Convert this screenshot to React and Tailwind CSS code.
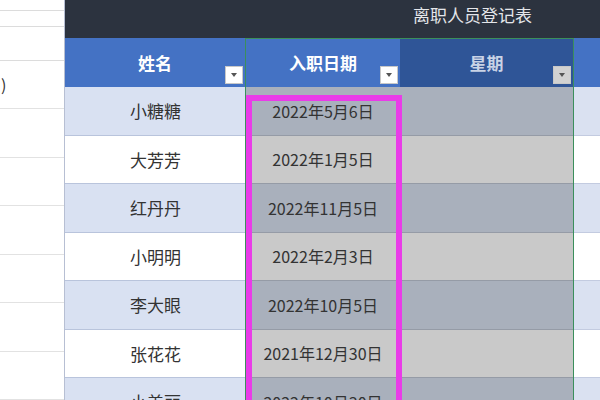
const rows = [
  { name: "小糖糖", date: "2022年5月6日" },
  { name: "大芳芳", date: "2022年1月5日" },
  { name: "红丹丹", date: "2022年11月5日" },
  { name: "小明明", date: "2022年2月3日" },
  { name: "李大眼", date: "2022年10月5日" },
  { name: "张花花", date: "2021年12月30日" },
  { name: "小美丽", date: "2022年10月30日" },
];

function Dropdown({ grey }) {
  return (
    <div
      className={
        "absolute right-[2px] bottom-[3px] w-[18px] h-[18px] flex items-center justify-center border border-[#c8c8c8] " +
        (grey ? "bg-[#d2d2d2]" : "bg-white")
      }
    >
      <div className="w-0 h-0 border-l-[3px] border-r-[3px] border-t-[4px] border-l-transparent border-r-transparent border-t-[#555]" />
    </div>
  );
}

export default function App() {
  return (
    <div
      className="relative w-[600px] h-[400px] overflow-hidden bg-white flex text-[#333]"
      style={{ fontFamily: '"Noto Sans CJK SC", "Noto Sans", sans-serif' }}
    >
      {/* left sheet strip */}
      <div className="w-[65px] shrink-0 flex flex-col border-r border-[#b7bfd3]">
        <div className="h-[16px] border-b border-[#dcdcdc]" />
        <div className="h-[22px] border-b border-[#dcdcdc]" />
        <div className="h-[49px] border-b border-[#dcdcdc]" />
        {rows.map((r, i) => (
          <div
            key={i}
            className="h-[48.5px] shrink-0 border-b border-[#e2e2e2] flex items-center text-[16px] pl-[1px]"
          >
            {i === 0 ? ")" : ""}
          </div>
        ))}
      </div>

      {/* table */}
      <div className="flex-1 flex flex-col">
        <div className="h-[38px] shrink-0 bg-[#2c333f] flex items-start pt-[2px] pl-[348px] text-[17px] text-[#e4e6ea]">
          离职人员登记表
        </div>
        <div className="h-[49px] shrink-0 grid grid-cols-[181px_154px_173px_27px] text-white font-bold text-[17px]">
          <div className="relative bg-[#4472c4] flex items-center justify-center border-r border-[#3d66b0]">
            姓名
            <Dropdown />
          </div>
          <div className="relative bg-[#4472c4] flex items-center justify-center">
            入职日期
            <Dropdown />
          </div>
          <div className="relative bg-[#2f5597] flex items-center justify-center text-[#c9d3e6]">
            星期
            <Dropdown grey />
          </div>
          <div className="bg-[#4472c4]" />
        </div>
        {rows.map((r, i) => {
          const odd = i % 2 === 0;
          return (
            <div
              key={i}
              className="h-[48.5px] shrink-0 grid grid-cols-[181px_154px_173px_27px] text-[16px]"
            >
              <div
                className={
                  "flex items-center justify-center text-[17px] border-b border-[#b9c4dc] " +
                  (odd ? "bg-[#d9e1f2]" : "bg-white")
                }
              >
                {r.name}
              </div>
              <div
                className={
                  "flex items-center justify-center border-b border-[#959ba6] " +
                  (odd ? "bg-[#a9b0bc]" : "bg-[#c9c9c9]")
                }
              >
                {r.date}
              </div>
              <div
                className={
                  "border-b border-[#959ba6] " + (odd ? "bg-[#a9b0bc]" : "bg-[#c9c9c9]")
                }
              />
              <div
                className={
                  "border-b border-[#c3cbe0] " + (odd ? "bg-[#dae1f1]" : "bg-white")
                }
              />
            </div>
          );
        })}
      </div>

      {/* selection outline */}
      <div className="absolute left-[245px] top-[38px] w-[329px] h-[400px] border border-[#3b8f5c] pointer-events-none" />
      {/* magenta highlight */}
      <div className="absolute left-[246px] top-[95px] w-[156px] h-[340px] border-[6px] border-[#e93ce8] pointer-events-none" />
    </div>
  );
}
